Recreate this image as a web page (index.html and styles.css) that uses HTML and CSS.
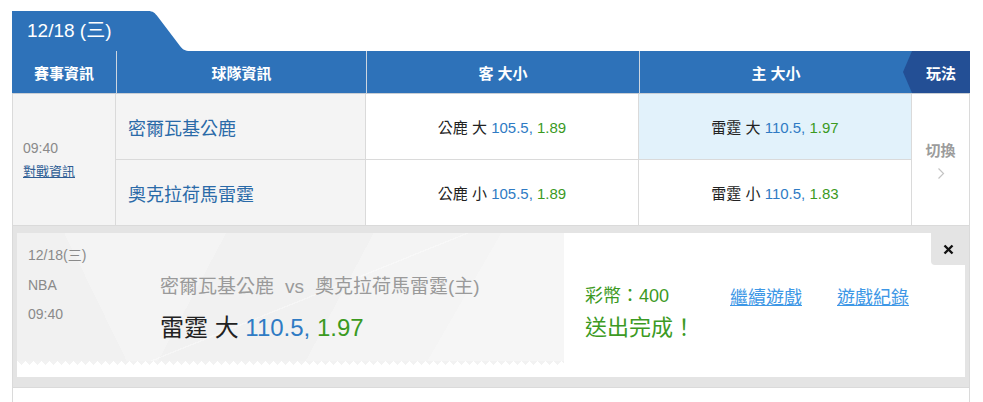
FILE: index.html
```html
<!DOCTYPE html>
<html>
    <head>
        <meta charset='utf-8'>
        <title>大小 - 12/18</title>
        <link rel="stylesheet" href="styles.css">
    </head>
    <body>
        <div class="board">
            <div class="tab-row">
                <div class="tab">12/18 (三)</div>
                <svg class="tab-curve" width="45" height="40" viewBox="0 0 45 40"><path d="M0 0 H3 C8 0 10 2 13 6 L35 35 C38 39 40 40 46 40 H0 Z" fill="#2e72b9"/></svg>
            </div>
            <div class="head">
                <div>賽事資訊</div>
                <div>球隊資訊</div>
                <div>客 大小</div>
                <div>主 大小</div>
                <div class="play">玩法</div>
            </div>
            <div class="rows">
                <div class="cell info">
                    <span class="time">09:40</span>
                    <a href="#" class="vs-link">對戰資訊</a>
                </div>
                <div class="cell team">密爾瓦基公鹿</div>
                <div class="cell odds"><span>公鹿 大 <span class="line">105.5,</span> <span class="rate">1.89</span></span></div>
                <div class="cell odds picked"><span>雷霆 大 <span class="line">110.5,</span> <span class="rate">1.97</span></span></div>
                <div class="cell switch">
                    <span>切換</span>
                    <svg width="8" height="13" viewBox="0 0 8 13"><polyline points="1.5,1.5 6.5,6.5 1.5,11.5" fill="none" stroke="#c4c4c4" stroke-width="1.2"/></svg>
                </div>
                <div class="cell team">奧克拉荷馬雷霆</div>
                <div class="cell odds"><span>公鹿 小 <span class="line">105.5,</span> <span class="rate">1.89</span></span></div>
                <div class="cell odds"><span>雷霆 小 <span class="line">110.5,</span> <span class="rate">1.83</span></span></div>
            </div>
            <div class="result">
                <div class="panel">
                    <div class="ticket">
                        <div class="ticket-body">
                            <div class="meta">
                                <div>12/18(三)</div>
                                <div>NBA</div>
                                <div>09:40</div>
                            </div>
                            <div class="bet">
                                <div class="match">密爾瓦基公鹿<span class="vs">vs</span>奧克拉荷馬雷霆(主)</div>
                                <div class="pick">雷霆 大 <span class="line">110.5,</span> <span class="rate">1.97</span></div>
                            </div>
                        </div>
                        <div class="ticket-edge"></div>
                    </div>
                    <div class="done">
                        <div class="done-top">
                            <span class="coins">彩幣：400</span>
                            <a href="#" class="more">繼續遊戲</a>
                            <a href="#" class="more">遊戲紀錄</a>
                        </div>
                        <div class="sent">送出完成！</div>
                    </div>
                    <div class="close">
                        <svg width="11" height="11" viewBox="0 0 11 11"><path d="M1.5 1.5 L9.5 9.5 M9.5 1.5 L1.5 9.5" stroke="#111" stroke-width="2.4"/></svg>
                    </div>
                </div>
            </div>
            <div class="next-row"></div>
        </div>
    </body>
</html>
```

FILE: styles.css
```css
body {
    margin: 0;
    font-family: "Liberation Sans", "Noto Sans CJK TC", sans-serif;
    background: #fff;
}
.board {
    width: 958px;
    margin: 11px 0 0 12px;
}
.tab-row {
    display: flex;
    height: 40px;
}
.tab {
    width: 133px;
    padding-left: 15px;
    box-sizing: border-box;
    background: #2e72b9;
    color: #fff;
    font-size: 19px;
    line-height: 40px;
}
.tab-curve {
    display: block;
}
.head {
    display: grid;
    grid-template-columns: 104px 250px 273px 273px 58px;
    height: 42px;
    background: #2e72b9;
    border-bottom: 1px solid #c9ced4;
}
.head > div {
    display: flex;
    align-items: center;
    justify-content: center;
    color: #fff;
    font-size: 15px;
    font-weight: bold;
    border-left: 1px solid #cdd6e0;
}
.head > div:first-child {
    border-left: none;
}
.head .play {
    position: relative;
    background: #234f95;
    border-left: none;
}
.head .play::before {
    content: "";
    position: absolute;
    left: -9px;
    top: 0;
    border-top: 21px solid transparent;
    border-bottom: 21px solid transparent;
    border-right: 9px solid #234f95;
}
.rows {
    display: grid;
    grid-template-columns: 104px 250px 273px 273px 58px;
    grid-template-rows: 66px 66px;
}
.cell {
    border-right: 1px solid #dadada;
    border-bottom: 1px solid #dadada;
    box-sizing: border-box;
}
.info {
    grid-row: span 2;
    border-left: 1px solid #dadada;
    background: #f4f4f4;
    display: flex;
    flex-direction: column;
    justify-content: center;
    padding: 2px 0 0 10px;
}
.time {
    color: #8a8a8a;
    font-size: 14px;
    line-height: 22px;
}
.vs-link {
    color: #2d5d94;
    font-size: 13px;
    line-height: 26px;
}
.team {
    background: #f4f4f4;
    color: #2a6aa8;
    font-size: 18px;
    display: flex;
    align-items: center;
    padding-left: 12px;
}
.odds {
    display: flex;
    align-items: center;
    justify-content: center;
    font-size: 15px;
    color: #222;
}
.odds.picked {
    background: #e2f2fb;
}
.line {
    color: #2f7bc4;
}
.rate {
    color: #3b9a1f;
}
.switch {
    grid-row: span 2;
    display: flex;
    flex-direction: column;
    align-items: center;
    justify-content: center;
    gap: 7px;
    color: #9c9c9c;
    font-size: 15px;
    font-weight: bold;
}
.result {
    background: #e4e4e4;
    border-left: 1px solid #dadada;
    border-right: 1px solid #dadada;
    padding: 7px 4px 10px 4px;
}
.panel {
    position: relative;
    display: flex;
    height: 144px;
    background: #fff;
}
.ticket {
    width: 547px;
    display: flex;
    flex-direction: column;
}
.ticket-body {
    flex: 1;
    display: grid;
    grid-template-columns: 132px 1fr;
    padding: 8px 0 0 11px;
    background:
        linear-gradient(158deg, transparent 0 52%, rgba(255,255,255,.35) 52% 52.4%, transparent 52.4%),
        linear-gradient(64deg, #f1f1f1 0 18%, transparent 18%),
        linear-gradient(300deg, #f6f6f6 0 22%, transparent 22%),
        linear-gradient(118deg, #f4f4f4 0 34%, #f1f1f1 34% 58%, #f4f4f4 58% 80%, #f2f2f2 80%);
}
.ticket-edge {
    height: 16px;
    background:
        linear-gradient(135deg, #f2f2f2 25%, transparent 25%) -4px 0 / 8px 8px repeat-x,
        linear-gradient(225deg, #f2f2f2 25%, transparent 25%) -4px 0 / 8px 8px repeat-x,
        #fff;
}
.meta {
    color: #8a8a8a;
    font-size: 14px;
    line-height: 29.5px;
}
.bet {
    padding-top: 34px;
}
.match {
    color: #9a9a9a;
    font-size: 19px;
    line-height: 24px;
}
.vs {
    margin: 0 11px;
}
.pick {
    margin-top: 14px;
    font-size: 24px;
    line-height: 30px;
    color: #222;
}
.done {
    flex: 1;
    padding: 48px 0 0 21px;
}
.done-top {
    display: flex;
    align-items: center;
    height: 26px;
}
.coins {
    color: #3c9a23;
    font-size: 18px;
    width: 145px;
}
.more {
    color: #3d97e6;
    font-size: 18px;
    margin-right: 35px;
    position: relative;
    top: 2px;
}
.sent {
    margin-top: 6px;
    color: #3c9a23;
    font-size: 22px;
    line-height: 30px;
}
.close {
    position: absolute;
    top: 0;
    right: 0;
    width: 34px;
    height: 32px;
    background: #e4e4e4;
    border-bottom-left-radius: 4px;
    display: flex;
    align-items: center;
    justify-content: center;
}
.next-row {
    height: 30px;
    border: 1px solid #dadada;
    border-bottom: none;
}
```
